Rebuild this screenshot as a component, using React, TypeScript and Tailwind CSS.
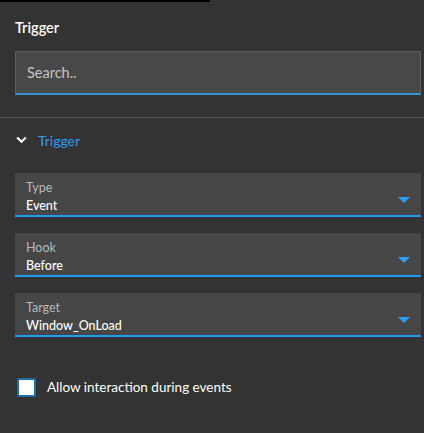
import { useState } from "react";

// ----------------------- Pieces -----------------------
function Caret() {
  return (
    <svg width="12" height="7" viewBox="0 0 12 7" className="shrink-0 mt-[24px]">
      <path d="M0 0 H12 L6 6 Z" fill="#2a9df4" />
    </svg>
  );
}

function SelectField({ label, value }: { label: string; value: string }) {
  return (
    <div className="h-[44px] bg-[#464646] border-b-2 border-[#1f9bef] flex items-start justify-between pl-[11px] pr-[11px]">
      <div className="pt-[6px] flex flex-col leading-[18px]">
        <span className="text-[12.5px] text-[#b9b9b9]">{label}</span>
        <span className="text-[12.5px] font-medium text-white">{value}</span>
      </div>
      <Caret />
    </div>
  );
}

// ----------------------------------------------------
// MAIN COMPONENT
// ----------------------------------------------------
export default function App() {
  const [allow, setAllow] = useState(false);

  return (
    <div
      className="w-[424px] h-[433px] bg-[#333333] overflow-hidden"
      style={{ fontFamily: "Lato, 'Open Sans', sans-serif" }}
    >
      {/* top strip */}
      <div className="h-[2px] w-[210px] bg-black" />

      <div className="pl-[15px] pr-[3px]">
        <h1 className="pt-[16px] mb-[13px] leading-[20px] text-[14.5px] font-semibold text-white">
          Trigger
        </h1>

        <div className="h-[44px] bg-[#484848] border border-[#5e5e5e] border-b-2 border-b-[#3595d3] flex items-center px-[11px]">
          <input
            placeholder="Search.."
            className="w-full bg-transparent outline-none text-[14.5px] text-white placeholder:text-[#c4c4c4]"
          />
        </div>
      </div>

      {/* divider */}
      <div className="mt-[22px] h-px bg-[#575757]" />

      <div className="pl-[15px] pr-[3px]">
        {/* section header */}
        <div className="mt-[12px] h-[20px] flex items-center gap-[11px] pl-[1px]">
          <svg width="11" height="8" viewBox="0 0 11 8">
            <path d="M1.2 1.5 L5.5 5.8 L9.8 1.5" fill="none" stroke="white" strokeWidth="2.2" />
          </svg>
          <span className="text-[14px] text-[#2a9df4]">Trigger</span>
        </div>

        {/* fields */}
        <div className="mt-[23px] flex flex-col gap-[16px]">
          <SelectField label="Type" value="Event" />
          <SelectField label="Hook" value="Before" />
          <SelectField label="Target" value="Window_OnLoad" />
        </div>

        {/* checkbox */}
        <label className="mt-[40px] flex items-center gap-[11px] pl-[2px] cursor-pointer">
          <span
            onClick={() => setAllow(!allow)}
            className="w-[19px] h-[19px] rounded-[2px] border-2 border-[#1d6fa5] bg-white shrink-0"
          />
          <span className="text-[13.5px] text-white">Allow interaction during events</span>
        </label>
      </div>
    </div>
  );
}
